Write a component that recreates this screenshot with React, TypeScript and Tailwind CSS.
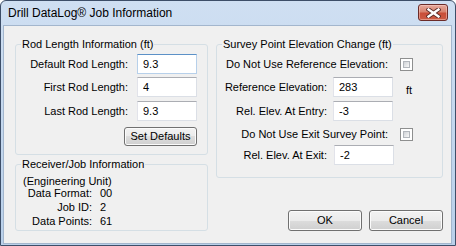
const font = "font-['Liberation_Sans',Arial,sans-serif]";

const field =
	"block h-[20px] w-[60px] border border-[#dbdfe6] border-t-[#abadb3] border-l-[#e2e3ea] bg-white pl-[5px] text-[11px] leading-[18px] text-black outline-none";

const fieldFocused =
	"block h-[20px] w-[60px] border border-[#b7d0ea] border-t-[#5c91c7] bg-white pl-[5px] text-[11px] leading-[18px] text-black outline-none";

const btn =
	"flex items-center justify-center rounded-[3px] border border-[#707070] bg-[linear-gradient(#f2f2f2_0%,#ebebeb_50%,#dddddd_50%,#cfcfcf_100%)] text-[11px] leading-[13px] text-black shadow-[inset_0_0_0_1px_#fbfbfb]";

function Field({
	value,
	focused,
	className = "",
}: {
	value: string;
	focused?: boolean;
	className?: string;
}) {
	return (
		<input
			readOnly
			defaultValue={value}
			className={`${focused ? fieldFocused : field} ${className}`}
		/>
	);
}

function CheckBox({ className = "" }: { className?: string }) {
	return (
		<div
			className={`h-[13px] w-[13px] shrink-0 border border-[#8e8f8f] bg-white p-[2px] ${className}`}
		>
			<div className="h-full w-full border border-[#b2b6bc] bg-[linear-gradient(135deg,#cfd2d6,#f8f8f8)]" />
		</div>
	);
}

function GroupBox({
	title,
	className,
	children,
}: {
	title: string;
	className: string;
	children: React.ReactNode;
}) {
	return (
		<fieldset
			className={`rounded-[3px] border border-[#d5dfe5] p-0 ${className}`}
		>
			<legend className="ml-[5px] px-[1px] text-[11px] leading-[13px]">
				{title}
			</legend>
			{children}
		</fieldset>
	);
}

function CloseButton() {
	return (
		<div className="mr-[4px] mt-[3px] flex h-[17px] w-[30px] items-center justify-center rounded-[3px] border border-[#6b2b28] bg-[linear-gradient(#e6a89d_0%,#d8846f_45%,#c94e38_55%,#cc5c45_100%)] shadow-[inset_0_0_0_1px_rgba(255,220,210,0.45)]">
			<svg width="15" height="10" viewBox="0 0 15 10">
				<path
					d="M2.5 1.5 L12.5 8.5 M12.5 1.5 L2.5 8.5"
					stroke="#5a2a26"
					strokeWidth="4.2"
					strokeLinecap="square"
				/>
				<path
					d="M2.5 1.5 L12.5 8.5 M12.5 1.5 L2.5 8.5"
					stroke="#ffffff"
					strokeWidth="2.4"
					strokeLinecap="square"
				/>
			</svg>
		</div>
	);
}

export default function App() {
	return (
		<div
			className={`flex h-[246px] w-[456px] flex-col rounded-t-[6px] border border-[#3d4e68] bg-[linear-gradient(#cfdff2,#b9d0ea)] pb-[1px] pl-[2px] pr-[3px] text-black ${font}`}
		>
			{/* title bar */}
			<div className="flex h-[24px] shrink-0 items-start justify-between">
				<span className="pl-[5px] pt-[5px] text-[12px] leading-[15px]">
					Drill DataLog® Job Information
				</span>
				<CloseButton />
			</div>

			{/* client area */}
			<div className="flex flex-1 gap-[8px] border border-[#a3b6cd] bg-[#f0f0f0] pl-[11px] pt-[12px] text-[11px] leading-[13px]">
				{/* left column */}
				<div className="flex w-[193px] flex-col gap-[3px]">
					<GroupBox title="Rod Length Information (ft)" className="h-[117px]">
						<div className="flex flex-col">
							<div className="mt-[3px] flex h-[20px] items-center">
								<span className="w-[112px] text-right">Default Rod Length:</span>
								<Field value="9.3" focused className="ml-[9px]" />
							</div>
							<div className="mt-[3px] flex h-[20px] items-center">
								<span className="w-[112px] text-right">First Rod Length:</span>
								<Field value="4" className="ml-[9px]" />
							</div>
							<div className="mt-[4px] flex h-[20px] items-center">
								<span className="w-[112px] text-right">Last Rod Length:</span>
								<Field value="9.3" className="ml-[9px]" />
							</div>
							<div className="mt-[6px] flex w-[181px] justify-end">
								<button type="button" className={`${btn} h-[19px] w-[73px]`}>
									Set Defaults
								</button>
							</div>
						</div>
					</GroupBox>

					<GroupBox title="Receiver/Job Information" className="h-[73px]">
						<div className="flex flex-col">
							<div className="mt-[4px] pl-[7px] leading-[12px]">
								(Engineering Unit)
							</div>
							<div className="flex leading-[13px]">
								<span className="w-[76px] text-right">Data Format:</span>
								<span className="ml-[8px]">00</span>
							</div>
							<div className="flex leading-[14px]">
								<span className="w-[76px] text-right">Job ID:</span>
								<span className="ml-[8px]">2</span>
							</div>
							<div className="flex leading-[15px]">
								<span className="w-[76px] text-right">Data Points:</span>
								<span className="ml-[8px]">61</span>
							</div>
						</div>
					</GroupBox>
				</div>

				{/* right column */}
				<div className="flex w-[227px] flex-col">
					<GroupBox
						title="Survey Point Elevation Change (ft)"
						className="h-[140px]"
					>
						<div className="flex flex-col">
							<div className="mt-[7px] flex h-[13px] items-center">
								<span className="w-[171px] text-right">
									Do Not Use Reference Elevation:
								</span>
								<CheckBox className="ml-[12px]" />
							</div>
							<div className="mt-[6px] flex h-[20px] items-center">
								<span className="w-[110px] text-right">Reference Elevation:</span>
								<Field value="283" className="ml-[6px]" />
								<span className="ml-[13px] pt-[6px]">ft</span>
							</div>
							<div className="mt-[4px] flex h-[20px] items-center">
								<span className="w-[110px] text-right">Rel. Elev. At Entry:</span>
								<Field value="-3" className="ml-[6px]" />
							</div>
							<div className="mt-[7px] flex h-[13px] items-center">
								<span className="w-[171px] text-right">
									Do Not Use Exit Survey Point:
								</span>
								<CheckBox className="ml-[12px]" />
							</div>
							<div className="mt-[4px] flex h-[20px] items-center">
								<span className="w-[110px] text-right">Rel. Elev. At Exit:</span>
								<Field value="-2" className="ml-[7px]" />
							</div>
						</div>
					</GroupBox>

					<div className="mt-[32px] flex justify-end gap-[7px]">
						<button
							type="button"
							className={`${btn} h-[21px] w-[74px] border-[#3c7fb1] shadow-[inset_0_0_0_1px_#a8e2f7]`}
						>
							OK
						</button>
						<button type="button" className={`${btn} h-[21px] w-[74px]`}>
							Cancel
						</button>
					</div>
				</div>
			</div>
		</div>
	);
}
